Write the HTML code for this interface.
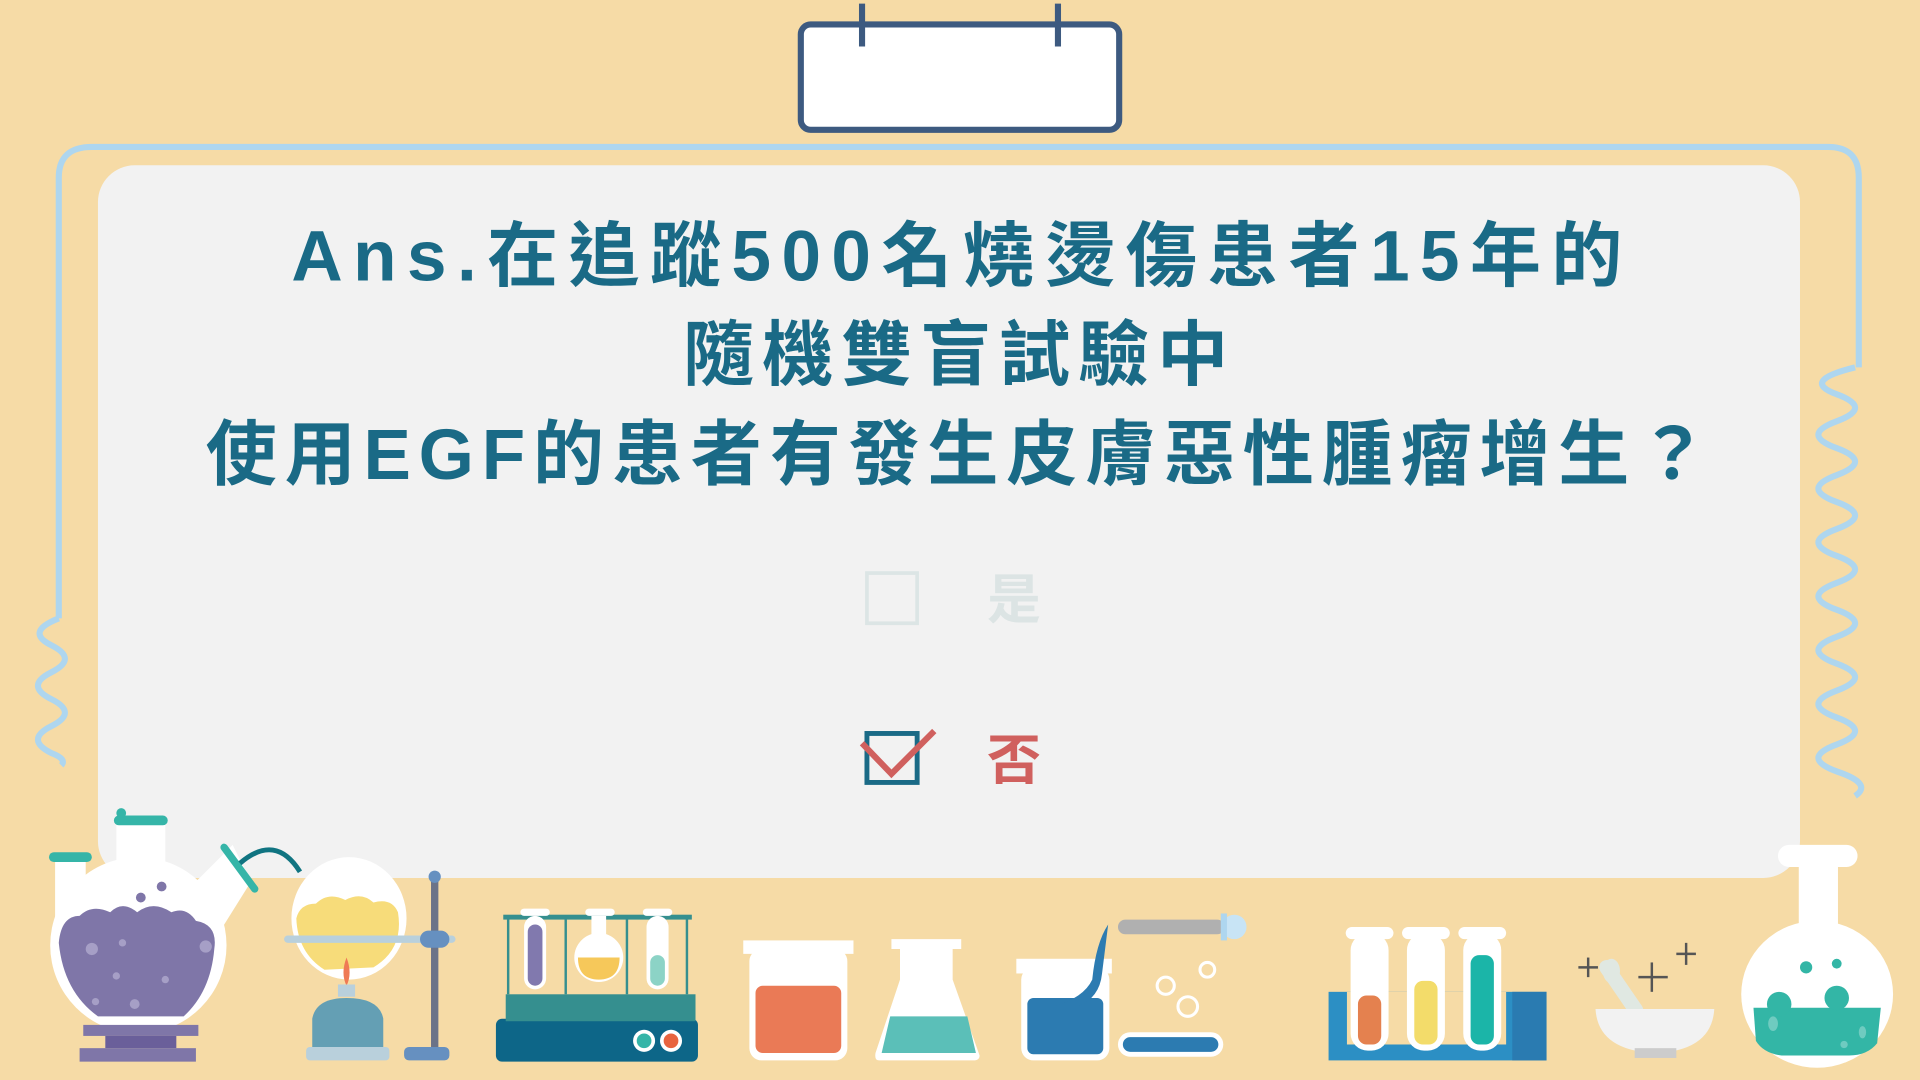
<!DOCTYPE html>
<html><head><meta charset="utf-8"><style>
html,body{margin:0;padding:0;background:#F6DBA6;width:1920px;height:1080px;overflow:hidden}
svg{display:block}
text{font-family:"Liberation Sans","Noto Sans CJK TC",sans-serif;font-weight:700}
</style></head><body>
<svg width="1920" height="1080" viewBox="0 0 1568 882" xmlns="http://www.w3.org/2000/svg">
<rect width="1568" height="882" fill="#F6DBA6"/>
<!-- blue frame -->
<path d="M48,505 L48,145 Q48,120 75,120 L1493,120 Q1518,120 1518,145 L1518,300" fill="none" stroke="#AED6EF" stroke-width="5"/>
<path d="M1515,300 Q1470,311 1500,322 T1500,344 T1500,366 T1500,388 T1500,410 T1500,432 T1500,454 T1500,476 T1500,498 T1500,520 T1500,542 T1500,564 T1500,586 T1500,608 T1500,630 Q1530,640 1515,650" fill="none" stroke="#AED6EF" stroke-width="5"/>
<path d="M48,505 Q20,516 42,527 T42,549 T42,571 T42,593 T42,615 Q55,620 50,625" fill="none" stroke="#AED6EF" stroke-width="5"/>
<!-- panel -->
<rect x="80" y="135" width="1390" height="582" rx="30" fill="#F2F2F2"/>
<!-- clipboard -->
<rect x="654" y="20" width="260" height="86" rx="8" fill="#fff" stroke="#3D5A80" stroke-width="5"/>
<line x1="704" y1="3" x2="704" y2="38" stroke="#3D5A80" stroke-width="5"/>
<line x1="864" y1="3" x2="864" y2="38" stroke="#3D5A80" stroke-width="5"/>
<!-- text -->
<g fill="#1A6A86" font-size="58">
<text x="238" y="229" textLength="1087" lengthAdjust="spacing">Ans.在追蹤500名燒燙傷患者15年的</text>
<text x="558" y="310" textLength="445" lengthAdjust="spacing">隨機雙盲試驗中</text>
<text x="168" y="391" textLength="1227" lengthAdjust="spacing">使用EGF的患者有發生皮膚惡性腫瘤增生？</text>
</g>
<rect x="708" y="468" width="41" height="41" fill="none" stroke="#DCE5E5" stroke-width="3"/>
<text x="806" y="505" font-size="44" fill="#DCE4E4">是</text>
<rect x="708" y="599" width="41" height="40" fill="none" stroke="#1A6A86" stroke-width="4"/>
<path d="M704,607 L728,632 L763,597" fill="none" stroke="#D0605E" stroke-width="5"/>
<text x="806" y="636" font-size="44" fill="#D0605E">否</text>
<!-- left flask -->
<rect x="95" y="668" width="40" height="60" fill="#fff"/>
<rect x="45" y="700" width="25" height="60" fill="#fff"/>
<path d="M160,720 L190,690 L205,720 L180,760 Z" fill="#fff"/>
<ellipse cx="113" cy="772" rx="72" ry="72" fill="#fff"/>
<path d="M48,770 Q50,748 65,748 Q75,738 90,745 Q100,735 112,745 Q125,735 140,745 Q152,740 160,752 Q178,755 175,775 Q172,810 150,830 L80,830 Q52,810 48,770Z" fill="#7F76A8"/>
<circle cx="115" cy="733" r="4" fill="#7F76A8"/><circle cx="132" cy="724" r="4" fill="#7F76A8"/>
<g fill="#A69FC6"><circle cx="75" cy="775" r="5"/><circle cx="100" cy="770" r="3"/><circle cx="168" cy="773" r="5"/><circle cx="95" cy="797" r="3"/><circle cx="135" cy="800" r="3"/><circle cx="78" cy="818" r="3"/><circle cx="110" cy="820" r="4"/></g>
<rect x="93" y="666" width="44" height="8" rx="4" fill="#35B5A8"/><rect x="95" y="660" width="8" height="8" rx="4" fill="#35B5A8"/>
<rect x="40" y="696" width="35" height="8" rx="4" fill="#35B5A8"/>
<line x1="183" y1="692" x2="208" y2="726" stroke="#35B5A8" stroke-width="6" stroke-linecap="round"/>
<path d="M196,705 Q225,680 245,712" fill="none" stroke="#107481" stroke-width="4"/>
<rect x="68" y="837" width="94" height="9" fill="#7F76A8"/><rect x="86" y="846" width="58" height="10" fill="#6A5F9A"/><rect x="65" y="856" width="95" height="11" fill="#7F76A8"/>
<!-- round flask on stand -->
<ellipse cx="285" cy="750" rx="47" ry="50" fill="#fff"/>
<path d="M242,750 Q245,738 258,738 Q268,728 282,735 Q295,728 305,737 Q320,733 325,745 Q330,775 305,790 L265,792 Q243,778 242,750Z" fill="#F7DC7A"/>
<rect x="232" y="764" width="140" height="6" rx="3" fill="#B9D0DC"/>
<rect x="352" y="713" width="6" height="147" fill="#6B7388"/>
<circle cx="355" cy="716" r="5" fill="#6690C0"/>
<rect x="343" y="760" width="24" height="14" rx="7" fill="#6690C0"/>
<rect x="330" y="855" width="37" height="11" rx="4" fill="#6690C0"/>
<path d="M283,782 Q278,795 283,805 Q288,795 283,782Z" fill="#EF7A55"/>
<rect x="276" y="804" width="14" height="10" fill="#B9D0DC"/>
<path d="M255,855 L255,832 Q258,815 283,815 Q310,815 313,832 L313,855Z" fill="#649FB4"/>
<rect x="250" y="855" width="68" height="11" rx="3" fill="#B9D0DC"/>
<!-- hot plate -->
<rect x="405" y="832" width="165" height="35" rx="5" fill="#0D6688"/>
<rect x="413" y="812" width="155" height="22" fill="#358F8F"/>
<rect x="411" y="747" width="154" height="4" fill="#358F8F"/>
<g stroke="#358F8F" stroke-width="2"><line x1="415" y1="750" x2="415" y2="812"/><line x1="462" y1="750" x2="462" y2="812"/><line x1="512" y1="750" x2="512" y2="812"/><line x1="561" y1="750" x2="561" y2="812"/></g>
<rect x="425" y="742" width="24" height="6" rx="3" fill="#fff"/><rect x="478" y="742" width="24" height="6" rx="3" fill="#fff"/><rect x="525" y="742" width="24" height="6" rx="3" fill="#fff"/>
<rect x="428" y="748" width="18" height="60" rx="9" fill="#fff"/><rect x="431" y="755" width="12" height="50" rx="6" fill="#8179AE"/>
<rect x="483" y="748" width="12" height="25" fill="#fff"/><circle cx="489" cy="782" r="20" fill="#fff"/><path d="M472,782 L506,782 Q506,800 489,800 Q472,800 472,782Z" fill="#F6C85A"/>
<rect x="528" y="748" width="18" height="60" rx="9" fill="#fff"/><rect x="531" y="780" width="12" height="25" rx="6" fill="#8CD3C6"/>
<circle cx="526" cy="850" r="9" fill="#fff"/><circle cx="526" cy="850" r="6" fill="#35B5A8"/>
<circle cx="548" cy="850" r="9" fill="#fff"/><circle cx="548" cy="850" r="6" fill="#E8643F"/>
<!-- orange beaker -->
<rect x="607" y="768" width="90" height="11" fill="#fff"/>
<rect x="612" y="775" width="80" height="91" rx="10" fill="#fff"/>
<rect x="617" y="805" width="70" height="55" rx="6" fill="#EA7A56"/>
<!-- conical flask -->
<path d="M728,767 L785,767 L785,775 L778,775 L778,800 L800,862 Q800,866 795,866 L718,866 Q714,866 715,860 L735,800 L735,775 L728,775Z" fill="#fff"/>
<path d="M727,830 L790,830 L797,860 L720,860Z" fill="#5BBFB8"/>
<!-- blue beaker + dropper -->
<rect x="830" y="783" width="78" height="12" fill="#fff"/>
<rect x="834" y="790" width="72" height="76" rx="10" fill="#fff"/>
<rect x="839" y="815" width="62" height="46" rx="5" fill="#2C7BB1"/>
<path d="M905,755 Q895,770 892,800 Q885,815 860,822 L880,822 Q898,815 900,795 Z" fill="#2C7BB1"/>
<rect x="913" y="751" width="87" height="12" rx="6" fill="#B0B0B0"/>
<ellipse cx="1008" cy="757" rx="10" ry="10" fill="#C8E4F5"/><rect x="997" y="746" width="5" height="22" fill="#AED6EF"/>
<g fill="none" stroke="#fff" stroke-width="2.5"><circle cx="952" cy="805" r="7"/><circle cx="986" cy="792" r="6"/><circle cx="970" cy="822" r="8"/></g>
<rect x="913" y="843" width="86" height="20" rx="10" fill="#fff"/><rect x="917" y="847" width="78" height="12" rx="6" fill="#2C7BB1"/>
<!-- test tube rack -->
<rect x="1085" y="810" width="178" height="56" fill="#2C8FC4"/><rect x="1235" y="810" width="28" height="56" fill="#2A7BB1"/>
<rect x="1100" y="810" width="130" height="43" fill="#F6DBA6"/>
<g fill="#fff"><rect x="1099" y="757" width="39" height="10" rx="5"/><rect x="1145" y="757" width="39" height="10" rx="5"/><rect x="1191" y="757" width="39" height="10" rx="5"/>
<rect x="1103" y="762" width="31" height="96" rx="14"/><rect x="1149" y="762" width="31" height="96" rx="14"/><rect x="1195" y="762" width="31" height="96" rx="14"/></g>
<rect x="1109" y="813" width="19" height="40" rx="7" fill="#E4814F"/>
<rect x="1155" y="801" width="19" height="52" rx="7" fill="#F3DC6A"/>
<rect x="1201" y="780" width="19" height="73" rx="7" fill="#1BB5A8"/>
<!-- mortar -->
<g stroke="#555" stroke-width="2"><line x1="1297" y1="782" x2="1297" y2="798"/><line x1="1289" y1="790" x2="1305" y2="790"/><line x1="1349" y1="786" x2="1349" y2="810"/><line x1="1338" y1="798" x2="1362" y2="798"/><line x1="1377" y1="770" x2="1377" y2="788"/><line x1="1369" y1="779" x2="1385" y2="779"/></g>
<path d="M1312,790 L1336,825" stroke="#E0E8E2" stroke-width="12" stroke-linecap="round"/>
<ellipse cx="1316" cy="793" rx="7" ry="10" fill="#E0E8E2"/>
<path d="M1303,824 L1400,824 Q1398,858 1352,860 Q1305,858 1303,824Z" fill="#F2F2F2"/>
<rect x="1335" y="856" width="34" height="8" fill="#CCCCCC"/>
<!-- right flask -->
<rect x="1452" y="690" width="65" height="18" rx="9" fill="#fff"/>
<rect x="1469" y="705" width="32" height="65" fill="#fff"/>
<ellipse cx="1484" cy="812" rx="62" ry="60" fill="#fff"/>
<path d="M1432,823 L1536,823 L1533,852 Q1525,862 1510,862 L1455,862 Q1440,860 1434,850Z" fill="#33B6A6"/>
<circle cx="1453" cy="820" r="10" fill="#33B6A6"/><circle cx="1500" cy="815" r="10" fill="#33B6A6"/>
<circle cx="1475" cy="790" r="5" fill="#33B6A6"/><circle cx="1500" cy="787" r="4" fill="#33B6A6"/>
<g fill="#6FCBC0"><ellipse cx="1448" cy="836" rx="4" ry="6"/><ellipse cx="1521" cy="843" rx="3" ry="5"/><circle cx="1506" cy="853" r="3"/></g>
</svg>
</body></html>
